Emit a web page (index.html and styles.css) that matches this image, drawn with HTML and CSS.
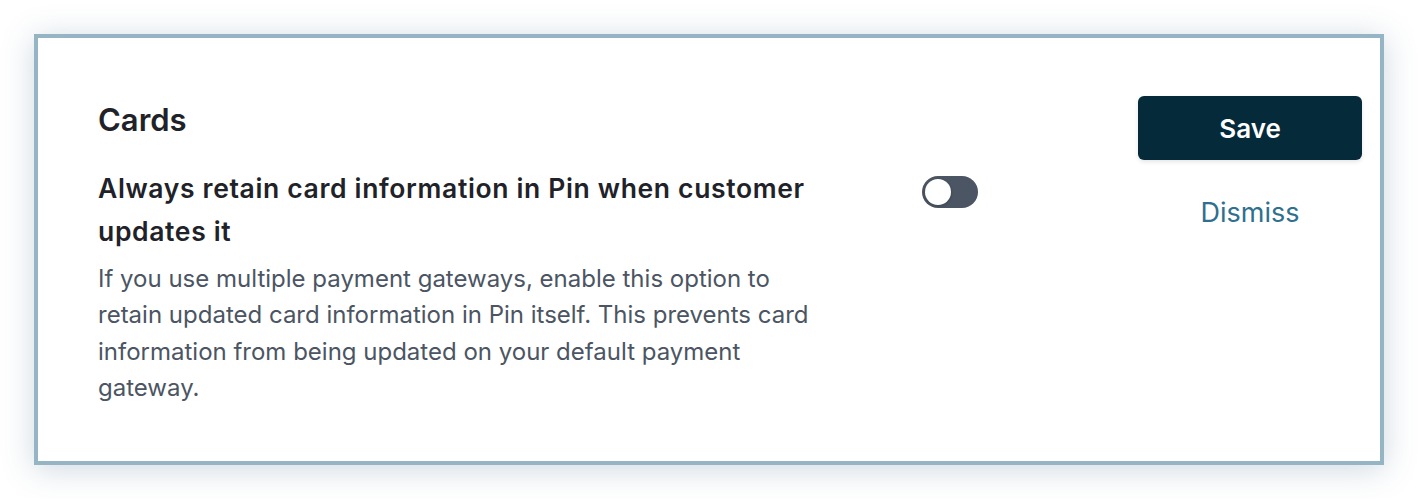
FILE: index.html
```html
<!DOCTYPE html>
<html>
<head>
<meta charset="utf-8">
<link rel="stylesheet" href="styles.css">
</head>
<body>
<div class="card">
  <div class="main">
    <h2 class="title">Cards</h2>
    <div class="setting">
      <div class="text">
        <div class="label">Always retain card information in Pin when customer updates it</div>
        <p class="desc">If you use multiple payment gateways, enable this option to retain updated card information in Pin itself. This prevents card information from being updated on your default payment gateway.</p>
      </div>
      <div class="toggle"><span class="knob"></span></div>
    </div>
  </div>
  <div class="actions">
    <button class="save">Save</button>
    <a class="dismiss">Dismiss</a>
  </div>
</div>
</body>
</html>
```

FILE: styles.css
```css
html, body { margin: 0; background: #fff; }
body {
  padding: 34px;
  font-family: Inter, "Noto Sans", sans-serif;
  color: #1f2329;
}
.card {
  width: 1342px;
  height: 423px;
  border: 4px solid #95b4c4;
  box-shadow: 0 4px 30px rgba(60, 100, 130, 0.25);
  display: flex;
}
.main {
  padding: 63px 0 0 60px;
  flex: 1;
}
.title {
  margin: 0 0 26px;
  font-size: 31px;
  font-weight: 600;
  line-height: 38px;
  color: #1f2329;
}
.setting {
  display: flex;
  align-items: flex-start;
}
.text { width: 714px; }
.label {
  padding-top: 2px;
  font-size: 26.5px;
  font-weight: 600;
  letter-spacing: 0.65px;
  line-height: 43px;
  color: #1f2329;
}
.desc {
  margin: 8px 0 0;
  font-size: 24px;
  line-height: 36.4px;
  color: #4b5563;
}
.toggle {
  margin: 11px 0 0 110px;
  width: 56px;
  height: 32px;
  border-radius: 16px;
  background: #4b5563;
  position: relative;
}
.knob {
  position: absolute;
  left: 3px;
  top: 3px;
  width: 26px;
  height: 26px;
  border-radius: 50%;
  background: #fff;
  box-shadow: 0 1px 3px rgba(0,0,0,0.2);
}
.actions {
  width: 224px;
  padding: 58px 18px 0 0;
  display: flex;
  flex-direction: column;
  align-items: center;
}
.save {
  width: 224px;
  height: 64px;
  border: none;
  border-radius: 6px;
  background: #052a3a;
  color: #fff;
  font-family: Inter, sans-serif;
  font-size: 26px;
  font-weight: 600;
  box-shadow: 0 2px 4px rgba(0,0,0,0.1);
}
.dismiss {
  margin-top: 38px;
  font-size: 27px;
  color: #2f6f8f;
  line-height: 30px;
}
```
